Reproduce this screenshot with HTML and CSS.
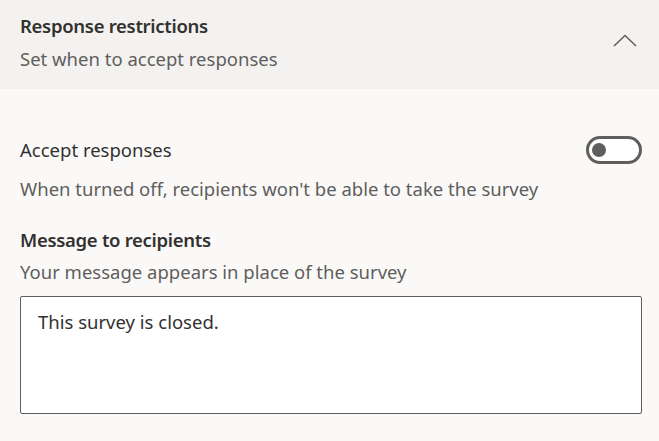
FILE: index.html
```html
<!DOCTYPE html>
<html lang="en">
<head>
<meta charset="utf-8">
<title>Response restrictions</title>
<link rel="stylesheet" href="styles.css">
</head>
<body>
<div class="panel">
  <div class="header">
    <div class="header-text">
      <div class="title">Response restrictions</div>
      <div class="subtitle">Set when to accept responses</div>
    </div>
    <svg class="chevron" width="24" height="13" viewBox="0 0 24 13" aria-hidden="true">
      <path d="M1 12 L12 1.5 L23 12" fill="none" stroke="#605e5c" stroke-width="1.5"/>
    </svg>
  </div>
  <div class="content">
    <div class="row">
      <div class="label">Accept responses</div>
      <div class="toggle"><span class="knob"></span></div>
    </div>
    <div class="desc desc-first">When turned off, recipients won't be able to take the survey</div>
    <div class="section-title">Message to recipients</div>
    <div class="desc desc-msg">Your message appears in place of the survey</div>
    <div class="textbox">This survey is closed.</div>
  </div>
</div>
</body>
</html>
```
FILE: styles.css
```css
html, body {
  margin: 0;
  padding: 0;
}
body {
  background: #faf9f8;
  font-family: "Noto Sans", "Open Sans", sans-serif;
  font-size: 18.5px;
  color: #323130;
  width: 659px;
  height: 441px;
  overflow: hidden;
}
.panel {
  display: flex;
  flex-direction: column;
}
.header {
  background: #f3f2f1;
  height: 89px;
  box-sizing: border-box;
  padding: 14px 22px 0 20px;
  display: flex;
  justify-content: space-between;
  align-items: flex-start;
}
.title {
  font-weight: 600;
  font-size: 18.5px;
  letter-spacing: -0.3px;
  line-height: 24px;
  color: #323130;
}
.subtitle {
  margin-top: 9px;
  line-height: 24px;
  color: #605e5c;
}
.chevron {
  margin-top: 20px;
}
.content {
  padding: 47px 17px 0 20px;
  display: flex;
  flex-direction: column;
}
.row {
  display: flex;
  justify-content: space-between;
  align-items: center;
  height: 28px;
}
.label {
  line-height: 24px;
  color: #323130;
}
.toggle {
  width: 56px;
  height: 28px;
  box-sizing: border-box;
  border: 3px solid #605e5c;
  border-radius: 14px;
  background: #ffffff;
  display: flex;
  align-items: center;
  padding-left: 3px;
}
.knob {
  width: 14px;
  height: 14px;
  border-radius: 50%;
  background: #605e5c;
}
.desc {
  line-height: 24px;
  color: #605e5c;
}
.desc-first {
  margin-top: 13px;
}
.section-title {
  margin-top: 27px;
  font-weight: 600;
  font-size: 18.5px;
  letter-spacing: -0.3px;
  line-height: 24px;
  color: #323130;
}
.desc-msg {
  margin-top: 8px;
}
.textbox {
  margin-top: 12px;
  width: 622px;
  height: 118px;
  box-sizing: border-box;
  border: 1px solid #605e5c;
  border-radius: 2px;
  background: #ffffff;
  padding: 13px 17px;
  line-height: 24px;
  color: #323130;
}
```
